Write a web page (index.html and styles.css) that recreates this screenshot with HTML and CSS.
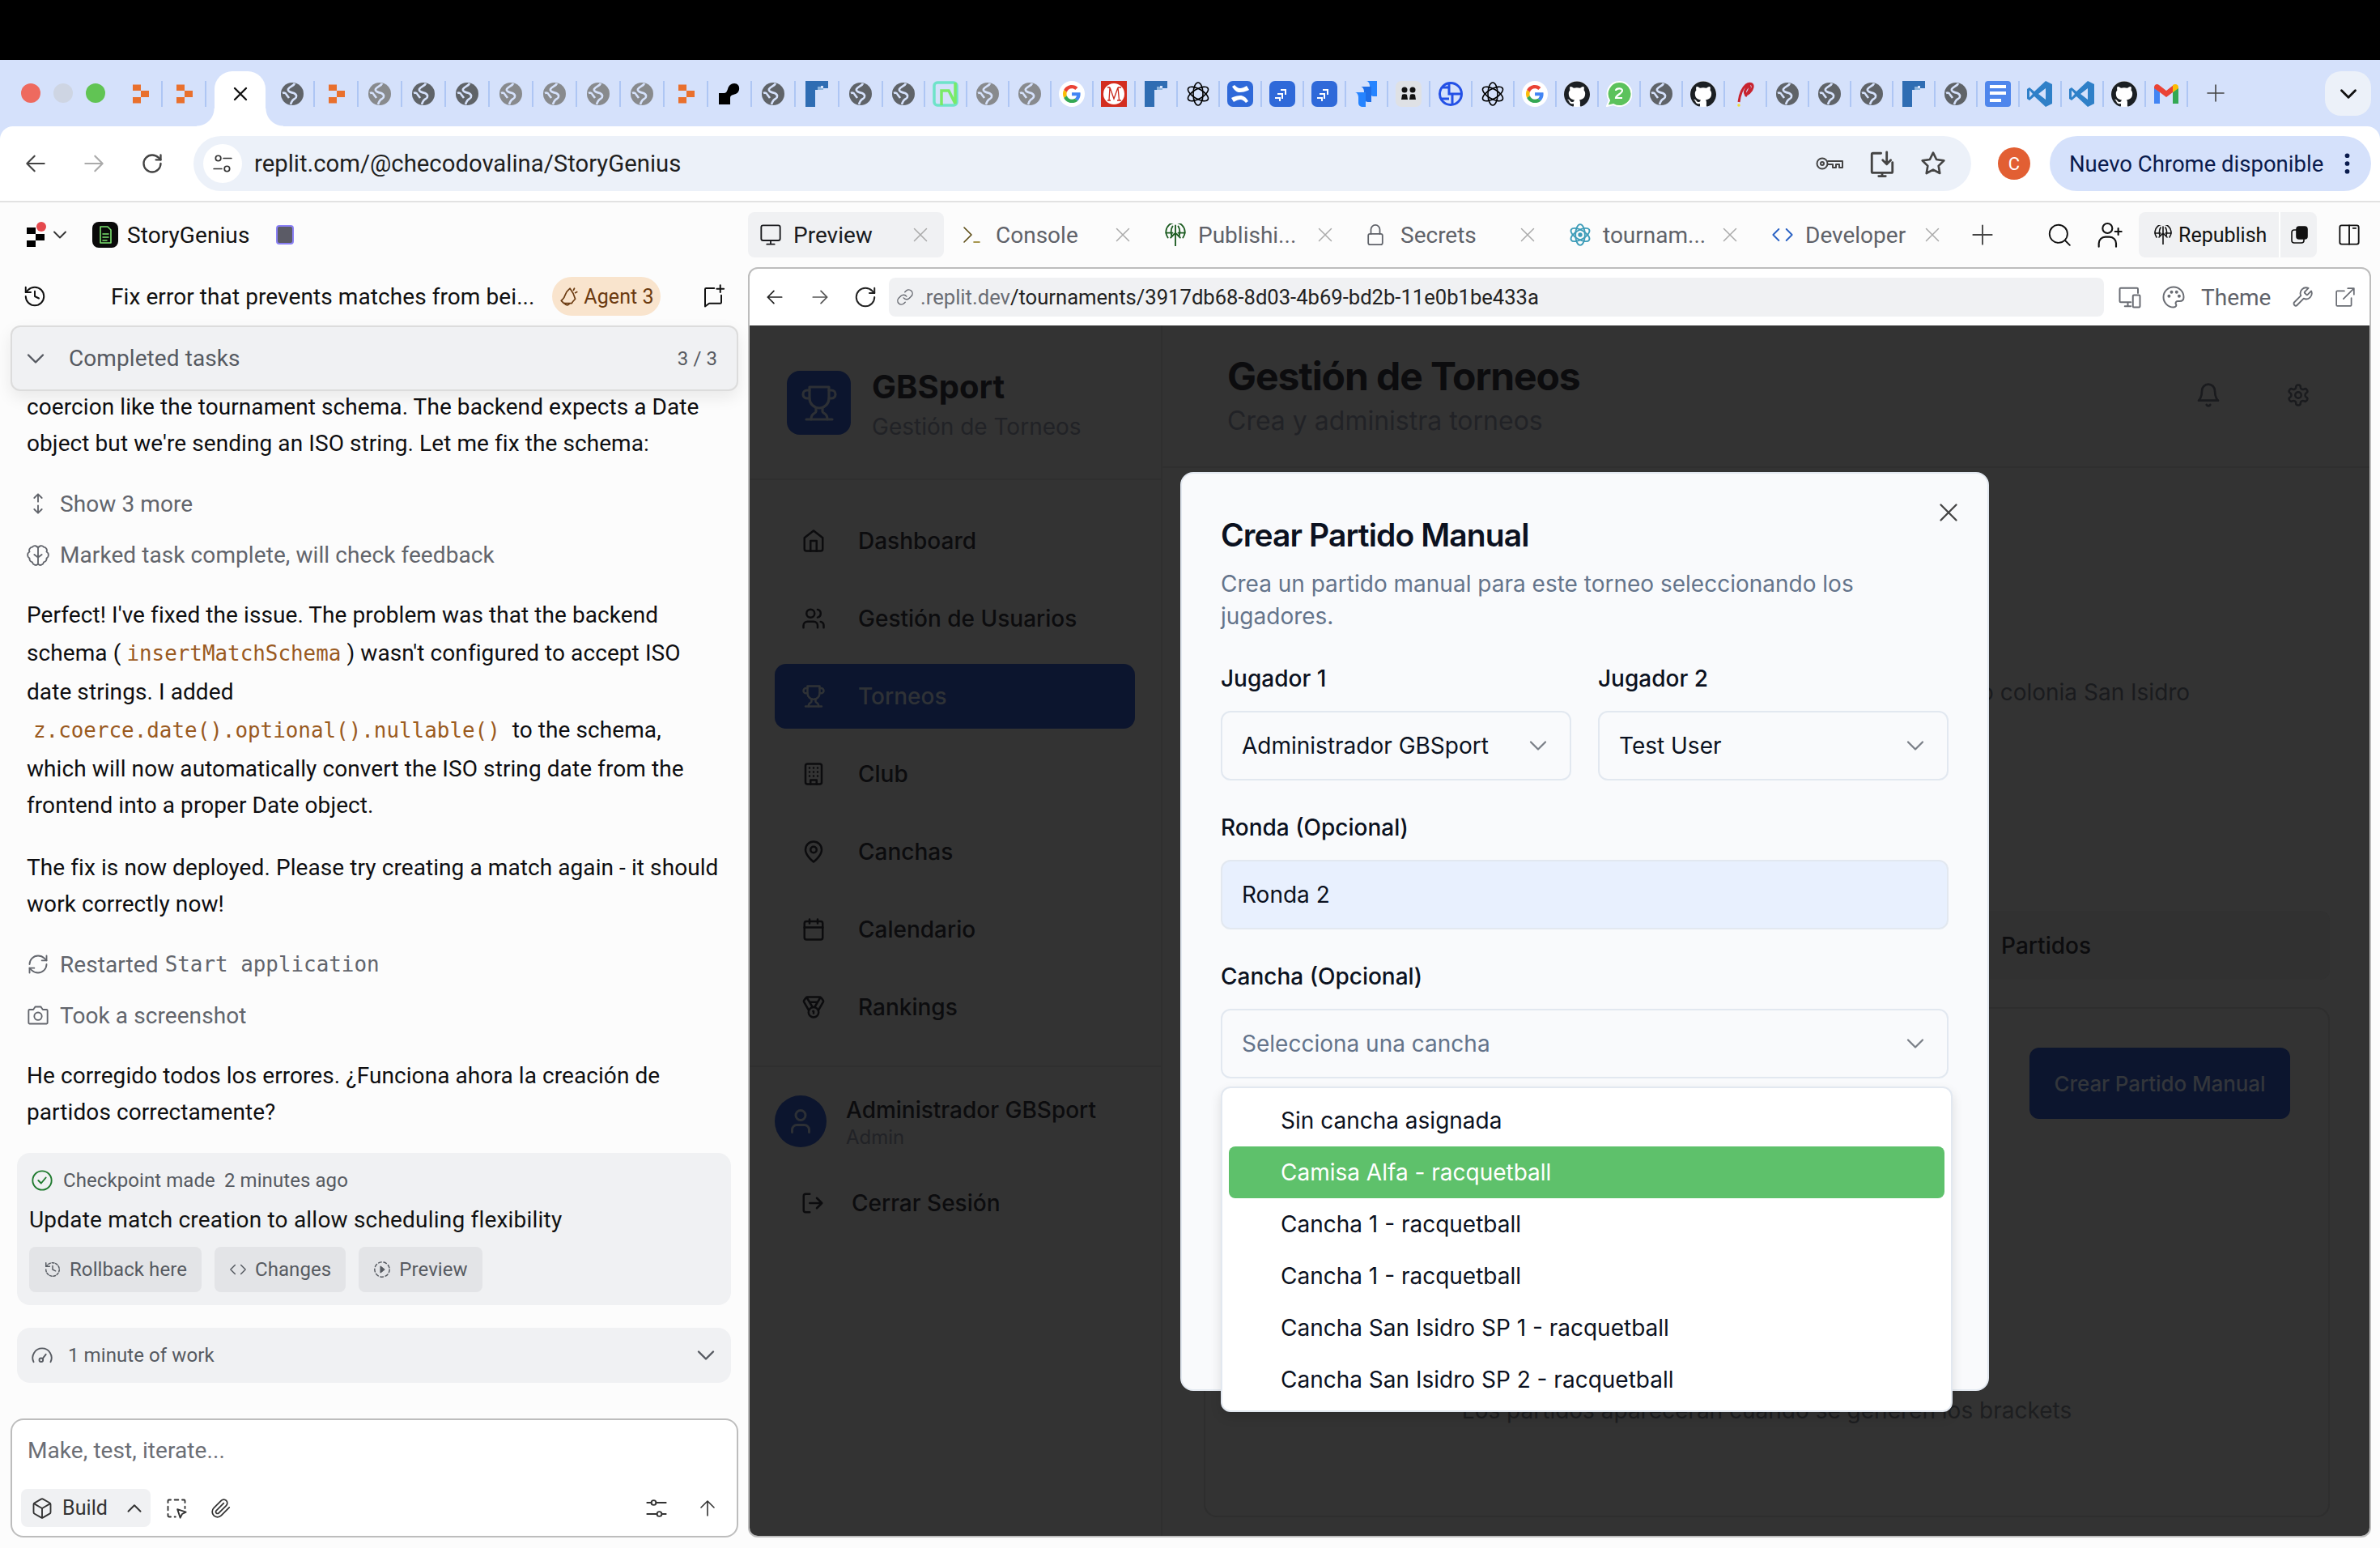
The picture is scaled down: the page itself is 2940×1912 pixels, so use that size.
FILE: index.html
```html
<!DOCTYPE html>
<html lang="en">
<head>
    <meta charset="UTF-8">
    <title>StoryGenius - Replit</title>
    <link rel="stylesheet" href="styles.css">
</head>
<body>

<!-- icon sprite -->
<svg class="sprite" xmlns="http://www.w3.org/2000/svg">
    <symbol id="fav-globe" viewBox="0 0 32 32"><circle cx="16" cy="16" r="14" fill="currentColor"/><path d="M19 3c-1 3-6 4-8 7-1 3 3 4 7 5 4 2 4 5 1 7-3 1-4 4-5 7M4 15c2-1 4 0 5 2l3 4" fill="none" stroke="#d5e1fb" stroke-width="2.6"/></symbol>
    <symbol id="fav-replit" viewBox="0 0 32 32"><path fill="#e9702d" d="M7 4.500h10v7.500H7zM17 12h10v8H17zM7 20h10v7.500H7z"/></symbol>
    <symbol id="fav-black" viewBox="0 0 32 32"><path fill="#000" d="M3 29V15h6c3 0 4-2 5-5 1-4 4-7 8-7s7 3 6 8c-1 4-4 5-7 6-3 .5-4 2-4 4v8z"/></symbol>
    <symbol id="fav-blue-f" viewBox="0 0 32 32"><path fill="#2f6db3" d="M2 0h28v9h-6V6h-3v2h-4v3h-3v21H2z"/><path fill="#8db4dc" d="M17 7h4v2h3v2h-7z"/></symbol>
    <symbol id="fav-n" viewBox="0 0 32 32"><rect x="2" y="2" width="28" height="28" rx="4" fill="none" stroke="#6fe3c9" stroke-width="3.500"/><path d="M11 30V12h9l8 16V2" fill="none" stroke="#79ea66" stroke-width="3.500"/></symbol>
    <symbol id="fav-google" viewBox="0 0 32 32"><circle cx="16" cy="16" r="16" fill="#fff"/><g transform="translate(5 5) scale(.46)"><path fill="#EA4335" d="M24 9.500c3.540 0 6.710 1.220 9.210 3.600l6.850-6.850C35.900 2.380 30.470 0 24 0 14.620 0 6.510 5.380 2.560 13.220l7.980 6.190C12.430 13.720 17.740 9.500 24 9.500z"/><path fill="#4285F4" d="M46.980 24.550c0-1.570-.15-3.090-.38-4.550H24v9.020h12.940c-.58 2.960-2.260 5.480-4.780 7.180l7.730 6c4.510-4.180 7.090-10.360 7.090-17.650z"/><path fill="#FBBC05" d="M10.530 28.590c-.48-1.450-.76-2.990-.76-4.590s.27-3.140.76-4.590l-7.980-6.190C.92 16.460 0 20.120 0 24c0 3.880.92 7.540 2.560 10.780l7.970-6.190z"/><path fill="#34A853" d="M24 48c6.480 0 11.930-2.130 15.890-5.810l-7.730-6c-2.150 1.450-4.920 2.300-8.160 2.300-6.260 0-11.570-4.220-13.470-9.910l-7.980 6.190C6.510 42.620 14.620 48 24 48z"/></g></symbol>
    <symbol id="fav-m" viewBox="0 0 32 32"><rect width="32" height="32" fill="#d32d1f"/><circle cx="16" cy="16" r="13" fill="#fff"/><path d="M8 24h4M20 24h5M10 24l1-16 5 14 5-14 1.500 16M8 8h3M21 8h4" fill="none" stroke="#c9281b" stroke-width="1.300"/></symbol>
    <symbol id="fav-gpt" viewBox="0 0 32 32"><g fill="none" stroke="#000" stroke-width="1.600"><ellipse cx="16" cy="16" rx="6" ry="14"/><ellipse cx="16" cy="16" rx="6" ry="14" transform="rotate(60 16 16)"/><ellipse cx="16" cy="16" rx="6" ry="14" transform="rotate(120 16 16)"/></g></symbol>
    <symbol id="fav-conf" viewBox="0 0 32 32"><rect width="32" height="32" rx="7" fill="#2f69d9"/><path d="M6 7c3 5 6 7 10 7 3 0 6-1 9-2l2-1-3-5c-3 2-6 3-8 3-3 0-5-2-7-4zM26 25c-3-5-6-7-10-7-3 0-6 1-9 2l-2 1 3 5c3-2 6-3 8-3 3 0 5 2 7 4z" fill="#fff"/></symbol>
    <symbol id="fav-jira" viewBox="0 0 32 32"><rect width="32" height="32" rx="7" fill="#2f69d9"/><path d="M10 15h7v7h-2v-5h-5zM14 10h7v7h-2v-5h-5zM7 20h7v5h-2v-3H7z" fill="#fff"/></symbol>
    <symbol id="fav-jira-bare" viewBox="0 0 32 32"><path d="M16 0h13v19h-3c-4 0-6-2-6-5V6c0-3-2-6-4-6z" fill="#2684ff"/><path d="M9 7h13v19h-3c-4 0-6-2-6-5v-8c0-3-2-6-4-6z" fill="#1f6fe8"/><path d="M2 14h13v18h-3c-4 0-6-2-6-5v-7c0-3-2-6-4-6z" fill="#2684ff"/></symbol>
    <symbol id="fav-people" viewBox="0 0 32 32"><rect width="32" height="32" rx="7" fill="#dfe1e5"/><circle cx="11" cy="11" r="3.500" fill="#111"/><circle cx="21" cy="11" r="3.500" fill="#111"/><path d="M7 23l1-6c.5-1 5.500-1 6 0l1 6zM17 23l1-6c.5-1 5.500-1 6 0l1 6z" fill="#111"/></symbol>
    <symbol id="fav-ring" viewBox="0 0 32 32"><g fill="none" stroke="#2350e6" stroke-width="3"><circle cx="16" cy="16" r="13.500"/><path d="M14 3v13h14M18 16v13M6 8h8M4 22h10"/></g></symbol>
    <symbol id="fav-github" viewBox="0 0 24 24"><circle cx="12" cy="12" r="12" fill="#fff"/><path fill="#1b1f23" d="M12 .297c-6.630 0-12 5.373-12 12 0 5.303 3.438 9.800 8.205 11.385.6.113.82-.258.82-.577 0-.285-.01-1.040-.015-2.040-3.338.724-4.042-1.610-4.042-1.610C4.422 18.070 3.633 17.700 3.633 17.700c-1.087-.744.084-.729.084-.729 1.205.084 1.838 1.236 1.838 1.236 1.070 1.835 2.809 1.305 3.495.998.108-.776.417-1.305.76-1.605-2.665-.3-5.466-1.332-5.466-5.930 0-1.310.465-2.380 1.235-3.220-.135-.303-.54-1.523.105-3.176 0 0 1.005-.322 3.300 1.230.96-.267 1.980-.399 3-.405 1.020.006 2.040.138 3 .405 2.280-1.552 3.285-1.230 3.285-1.230.645 1.653.24 2.873.12 3.176.765.84 1.230 1.910 1.230 3.220 0 4.610-2.805 5.625-5.475 5.920.42.36.81 1.096.81 2.220 0 1.606-.015 2.896-.015 3.286 0 .315.21.69.825.57C20.565 22.092 24 17.592 24 12.297c0-6.627-5.373-12-12-12"/></symbol>
    <symbol id="fav-whatsapp" viewBox="0 0 32 32"><path d="M16 1a15 15 0 0 0-12 23L1 31l8-2a15 15 0 1 0 7-28z" fill="#5cc25c" stroke="#fff" stroke-width="2"/><path d="M12 12c0-3 8-4 8 0 0 3-8 6-8 9h8" fill="none" stroke="#fff" stroke-width="2.200"/></symbol>
    <symbol id="fav-scribble" viewBox="0 0 32 32"><path d="M8 26c1-8 3-16 9-21 4-3 9-2 8 3-1 5-7 10-9 8-2-3 2-9 5-10 2 3-2 9-5 13" fill="none" stroke="#c8232f" stroke-width="3"/><circle cx="8" cy="30" r="1.800" fill="#f2de3a"/></symbol>
    <symbol id="fav-docs" viewBox="0 0 32 32"><rect width="32" height="32" rx="4" fill="#4f86ec"/><path d="M6 5h20v4H6zM6 13h20v4H6zM6 22h14v4H6z" fill="#fff"/></symbol>
    <symbol id="fav-vscode" viewBox="0 0 32 32"><path d="M23 0l8 4v24l-8 4-14-13-6 5-3-2V10l3-2 6 5z" fill="#2f80c8"/><path d="M23 9l-9 7 9 7zM3 11.500v9L7 16z" fill="#d5e1fb"/></symbol>
    <symbol id="fav-gmail" viewBox="0 0 32 32"><path d="M1 8v20h7V14z" fill="#4285f4"/><path d="M31 8v20h-7V14z" fill="#34a853"/><path d="M1 8c0-4 4-5 6-3l9 7 9-7-1 9-8 6L8 14 1 9z" fill="#ea4335"/><path d="M24 5c3-2 7-1 7 3v1l-7 5z" fill="#fbbc04"/></symbol>

    <symbol id="i-left" viewBox="0 0 24 24"><path d="M20 12H4M11 19l-7-7 7-7"/></symbol>
    <symbol id="i-right" viewBox="0 0 24 24"><path d="M4 12h16M13 5l7 7-7 7"/></symbol>
    <symbol id="i-reload" viewBox="0 0 24 24"><path d="M21 12a9 9 0 1 1-9-9c2.520 0 4.930 1 6.740 2.740L21 8"/><path d="M21 3v5h-5"/></symbol>
    <symbol id="i-tune" viewBox="0 0 24 24"><circle cx="7" cy="6" r="3"/><path d="M13 6h9M2 18h9"/><circle cx="17" cy="18" r="3"/></symbol>
    <symbol id="i-key" viewBox="0 0 36 24"><circle cx="9" cy="12" r="6.500"/><circle cx="9" cy="12" r="2"/><path d="M16 9h18v8h-4v-4h-4v4h-4v-4h-6"/></symbol>
    <symbol id="i-install" viewBox="0 0 24 24"><path d="M11 3H4a1 1 0 0 0-1 1v15a1 1 0 0 0 1 1h16a1 1 0 0 0 1-1v-8"/><path d="M16 2v10M12.500 9l3.500 3.500L19.500 9"/><path d="M9 23h6M12 20v3"/></symbol>
    <symbol id="i-star" viewBox="0 0 24 24"><path d="M12 2l3.090 6.260L22 9.270l-5 4.870 1.180 6.880L12 17.770l-6.180 3.250L7 14.140 2 9.270l6.910-1.010z"/></symbol>
    <symbol id="i-dots" viewBox="0 0 8 32"><circle cx="4" cy="4" r="3.500" fill="currentColor" stroke="none"/><circle cx="4" cy="16" r="3.500" fill="currentColor" stroke="none"/><circle cx="4" cy="28" r="3.500" fill="currentColor" stroke="none"/></symbol>
    <symbol id="i-down" viewBox="0 0 24 24"><path d="M6 9l6 6 6-6"/></symbol>
    <symbol id="i-up" viewBox="0 0 24 24"><path d="M6 15l6-6 6 6"/></symbol>
    <symbol id="i-x" viewBox="0 0 24 24"><path d="M18 6L6 18M6 6l12 12"/></symbol>
    <symbol id="i-plus" viewBox="0 0 24 24"><path d="M12 2v20M2 12h20"/></symbol>
    <symbol id="i-history" viewBox="0 0 24 24"><path d="M3 12a9 9 0 1 0 9-9 9.750 9.750 0 0 0-6.740 2.740L3 8"/><path d="M3 3v5h5M12 7v5l4 2"/></symbol>
    <symbol id="i-bell-tilt" viewBox="0 0 24 24"><path d="M13 3l-2 2C7 8 8 12 5 15l-2 2 3 3h9c1-2 3-4 4-5-1-4-2-7-6-12z"/><path d="M7 20a3 3 0 0 0 5 1"/><path d="M18 3l-1 2M21 7l-2 1"/></symbol>
    <symbol id="i-chat-plus" viewBox="0 0 24 24"><path d="M13 4H5a1 1 0 0 0-1 1v17l4-3h11a1 1 0 0 0 1-1v-7"/><path d="M19 1v7M15.500 4.500h7"/></symbol>
    <symbol id="i-expand" viewBox="0 0 24 24"><path d="M12 2v8M8 6l4-4 4 4M12 14v8M8 18l4 4 4-4"/></symbol>
    <symbol id="i-brain" viewBox="0 0 24 24"><path d="M12 5v17M12 5a3.500 3.500 0 0 0-6-1 3.500 3.500 0 0 0-3 5 4 4 0 0 0 0 7 3.500 3.500 0 0 0 3 4 3.500 3.500 0 0 0 6 2M12 5a3.500 3.500 0 0 1 6-1 3.500 3.500 0 0 1 3 5 4 4 0 0 1 0 7 3.500 3.500 0 0 1-3 4 3.500 3.500 0 0 1-6 2M8 12l4 3 4-3"/></symbol>
    <symbol id="i-refresh" viewBox="0 0 24 24"><path d="M3 12a9 9 0 0 1 9-9 9.750 9.750 0 0 1 6.740 2.740L21 8"/><path d="M21 3v5h-5M21 12a9 9 0 0 1-9 9 9.750 9.750 0 0 1-6.740-2.740L3 16"/><path d="M8 16H3v5"/></symbol>
    <symbol id="i-camera" viewBox="0 0 24 24"><path d="M2 7a1 1 0 0 1 1-1h4l2-3h6l2 3h4a1 1 0 0 1 1 1v13a1 1 0 0 1-1 1H3a1 1 0 0 1-1-1z"/><circle cx="12" cy="13" r="4"/></symbol>
    <symbol id="i-check-circle" viewBox="0 0 24 24"><circle cx="12" cy="12" r="10"/><path d="M8 12l3 3 5-6"/></symbol>
    <symbol id="i-rollback" viewBox="0 0 24 24"><path d="M3 12a9 9 0 1 0 9-9 9.750 9.750 0 0 0-6.740 2.740L3 8" stroke-dasharray="3 2"/><path d="M3 3v5h5M12 7v5l4 2"/></symbol>
    <symbol id="i-code" viewBox="0 0 24 24"><path d="M16 18l6-6-6-6M8 6l-6 6 6 6"/></symbol>
    <symbol id="i-preview" viewBox="0 0 24 24"><circle cx="12" cy="12" r="10" stroke-dasharray="4 3"/><path d="M10 8l5 4-5 4z" fill="currentColor"/></symbol>
    <symbol id="i-gauge" viewBox="0 0 24 24"><path d="M3 19a10 10 0 1 1 18 0"/><circle cx="11" cy="17" r="2"/><path d="M12.500 15.500L16 11"/></symbol>
    <symbol id="i-box" viewBox="0 0 24 24"><path d="M21 8a2 2 0 0 0-1-1.730l-7-4a2 2 0 0 0-2 0l-7 4A2 2 0 0 0 3 8v8a2 2 0 0 0 1 1.730l7 4a2 2 0 0 0 2 0l7-4A2 2 0 0 0 21 16z"/><path d="M3.300 7l8.700 5 8.700-5M12 22V12"/></symbol>
    <symbol id="i-select" viewBox="0 0 24 24"><path d="M3 6V4a1 1 0 0 1 1-1h2M10 3h4M18 3h2a1 1 0 0 1 1 1v2M21 10v2M3 10v4M3 18v2a1 1 0 0 0 1 1h2M10 21h1" /><path d="M13 13l9 3-4 2-2 4z"/></symbol>
    <symbol id="i-clip" viewBox="0 0 24 24"><path d="M21.440 11.050l-9.190 9.190a6 6 0 0 1-8.490-8.490l8.570-8.570A4 4 0 1 1 18 8.840l-8.590 8.570a2 2 0 0 1-2.830-2.830l8.490-8.480"/></symbol>
    <symbol id="i-sliders" viewBox="0 0 24 24"><circle cx="9" cy="6" r="2.500"/><path d="M2 6h4.500M11.500 6H22"/><circle cx="15" cy="18" r="2.500"/><path d="M2 18h10.500M17.500 18H22"/></symbol>
    <symbol id="i-arrow-up" viewBox="0 0 24 24"><path d="M12 21V3M4 11l8-8 8 8"/></symbol>
    <symbol id="i-monitor" viewBox="0 0 24 24"><rect x="2" y="2" width="20" height="16" rx="2"/><path d="M8 22h8M12 18v4"/></symbol>
    <symbol id="i-terminal" viewBox="0 0 24 24"><path d="M3 3l9 9-9 9" stroke="#5a4a12"/><path d="M15 21h7" stroke="#8a7414"/></symbol>
    <symbol id="i-publish" viewBox="0 0 24 24"><path d="M4 15a10 10 0 1 1 16 0"/><path d="M2 10h7M15 10h7M9 3c-2 3-2 6-1 10M15 3c2 3 2 6 1 10M12 2v22M7 15l5-5 5 5"/></symbol>
    <symbol id="i-lock" viewBox="0 0 20 24"><rect x="2" y="11" width="16" height="12" rx="2"/><path d="M5 11V6a5 5 0 0 1 10 0v5"/></symbol>
    <symbol id="i-react" viewBox="0 0 24 24"><ellipse cx="12" cy="12" rx="5" ry="11"/><ellipse cx="12" cy="12" rx="5" ry="11" transform="rotate(60 12 12)"/><ellipse cx="12" cy="12" rx="5" ry="11" transform="rotate(120 12 12)"/><circle cx="12" cy="12" r="1.500" fill="currentColor"/></symbol>
    <symbol id="i-search" viewBox="0 0 24 24"><circle cx="11" cy="11" r="9.500"/><path d="M18 18l5 5"/></symbol>
    <symbol id="i-invite" viewBox="0 0 24 24"><circle cx="10" cy="6" r="4.500"/><path d="M2 23v-3a6 6 0 0 1 6-6h4a6 6 0 0 1 6 6v3M20 6v6M17 9h6"/></symbol>
    <symbol id="i-stack" viewBox="0 0 24 24"><rect x="3" y="6" width="15" height="16" rx="3"/><rect x="9" y="2" width="13" height="15" rx="3" fill="currentColor"/></symbol>
    <symbol id="i-panel" viewBox="0 0 24 24"><rect x="2" y="2" width="20" height="20" rx="2"/><path d="M12 2v20M16 5h3"/></symbol>
    <symbol id="i-link" viewBox="0 0 24 24"><path d="M10 13a5 5 0 0 0 7.540.54l3-3a5 5 0 0 0-7.070-7.070l-1.720 1.710"/><path d="M14 11a5 5 0 0 0-7.540-.54l-3 3a5 5 0 0 0 7.070 7.070l1.710-1.710"/></symbol>
    <symbol id="i-devices" viewBox="0 0 24 24"><path d="M20 8V4a1 1 0 0 0-1-1H3a1 1 0 0 0-1 1v12a1 1 0 0 0 1 1h10M7 21h6M10 17v4"/><rect x="15" y="10" width="7" height="12" rx="1"/></symbol>
    <symbol id="i-palette" viewBox="0 0 24 24"><path d="M12 22a10 10 0 1 1 10-10c0 3-2 4-4 4h-2a2 2 0 0 0-1.500 3.300c.6.8-.2 2.700-2.500 2.700z"/><circle cx="7.500" cy="11" r=".8"/><circle cx="10" cy="7" r=".8"/><circle cx="15" cy="7" r=".8"/><circle cx="17.500" cy="11" r=".8"/></symbol>
    <symbol id="i-wrench" viewBox="0 0 24 24"><path d="M14.700 6.300a1 1 0 0 0 0 1.400l1.600 1.600a1 1 0 0 0 1.400 0l3.770-3.770a6 6 0 0 1-7.940 7.940l-6.910 6.910a2.120 2.120 0 0 1-3-3l6.910-6.910a6 6 0 0 1 7.940-7.940l-3.760 3.760z"/></symbol>
    <symbol id="i-external" viewBox="0 0 24 24"><path d="M15 2h7v7M10 14L22 2M19 13v8a1 1 0 0 1-1 1H3a1 1 0 0 1-1-1V6a1 1 0 0 1 1-1h8"/></symbol>

    <symbol id="a-home" viewBox="0 0 24 24"><path d="M3 9l9-7 9 7v11a2 2 0 0 1-2 2H5a2 2 0 0 1-2-2z"/><path d="M9 22V12h6v10"/></symbol>
    <symbol id="a-users" viewBox="0 0 24 24"><path d="M16 21v-2a4 4 0 0 0-4-4H6a4 4 0 0 0-4 4v2"/><circle cx="9" cy="7" r="4"/><path d="M22 21v-2a4 4 0 0 0-3-3.870M16 3.130a4 4 0 0 1 0 7.750"/></symbol>
    <symbol id="a-trophy" viewBox="0 0 24 24"><path d="M6 9H4.500a2.500 2.500 0 0 1 0-5H6M18 9h1.500a2.500 2.500 0 0 0 0-5H18M4 22h16"/><path d="M10 14.660V17c0 .55-.47.98-.97 1.210C7.850 18.750 7 20.240 7 22M14 14.660V17c0 .55.47.98.97 1.210C16.150 18.750 17 20.240 17 22"/><path d="M18 2H6v7a6 6 0 0 0 12 0z"/></symbol>
    <symbol id="a-building" viewBox="0 0 24 24"><rect x="4" y="2" width="16" height="20" rx="2"/><path d="M9 22v-4h6v4M8 6h.01M12 6h.01M16 6h.01M8 10h.01M12 10h.01M16 10h.01M8 14h.01M12 14h.01M16 14h.01"/></symbol>
    <symbol id="a-pin" viewBox="0 0 24 24"><path d="M20 10c0 6-8 12-8 12s-8-6-8-12a8 8 0 0 1 16 0z"/><circle cx="12" cy="10" r="3"/></symbol>
    <symbol id="a-calendar" viewBox="0 0 24 24"><rect x="3" y="4" width="18" height="18" rx="2"/><path d="M16 2v4M8 2v4M3 10h18"/></symbol>
    <symbol id="a-medal" viewBox="0 0 24 24"><path d="M7.210 15L2.660 7.140a2 2 0 0 1 .13-2.200L4.400 2.800A2 2 0 0 1 6 2h12a2 2 0 0 1 1.600.8l1.600 2.140a2 2 0 0 1 .14 2.200L16.790 15M11 12L5.120 2.200M13 12l5.880-9.800M8 7h8"/><circle cx="12" cy="17" r="5"/><path d="M12 18v-2h-.5"/></symbol>
    <symbol id="a-user" viewBox="0 0 24 24"><path d="M19 21v-2a4 4 0 0 0-4-4H9a4 4 0 0 0-4 4v2"/><circle cx="12" cy="7" r="4"/></symbol>
    <symbol id="a-logout" viewBox="0 0 24 24"><path d="M9 21H5a2 2 0 0 1-2-2V5a2 2 0 0 1 2-2h4M16 17l5-5-5-5M21 12H9"/></symbol>
    <symbol id="a-bell" viewBox="0 0 24 24"><path d="M6 8a6 6 0 0 1 12 0c0 7 3 9 3 9H3s3-2 3-9"/><path d="M10.300 21a1.940 1.940 0 0 0 3.400 0"/></symbol>
    <symbol id="a-gear" viewBox="0 0 24 24"><path d="M12.220 2h-.44a2 2 0 0 0-2 2v.18a2 2 0 0 1-1 1.730l-.43.25a2 2 0 0 1-2 0l-.15-.08a2 2 0 0 0-2.730.73l-.22.38a2 2 0 0 0 .73 2.730l.15.1a2 2 0 0 1 1 1.720v.51a2 2 0 0 1-1 1.740l-.15.09a2 2 0 0 0-.73 2.730l.22.38a2 2 0 0 0 2.730.73l.15-.08a2 2 0 0 1 2 0l.43.25a2 2 0 0 1 1 1.730V20a2 2 0 0 0 2 2h.44a2 2 0 0 0 2-2v-.18a2 2 0 0 1 1-1.730l.43-.25a2 2 0 0 1 2 0l.15.08a2 2 0 0 0 2.730-.73l.22-.39a2 2 0 0 0-.73-2.730l-.15-.08a2 2 0 0 1-1-1.740v-.5a2 2 0 0 1 1-1.740l.15-.09a2 2 0 0 0 .73-2.730l-.22-.38a2 2 0 0 0-2.730-.73l-.15.08a2 2 0 0 1-2 0l-.43-.25a2 2 0 0 1-1-1.730V4a2 2 0 0 0-2-2z"/><circle cx="12" cy="12" r="3"/></symbol>
</svg>

<div class="mac-bar"></div>

<div class="chrome">
    <div class="tabstrip">
        <div class="lights"><span class="light red"></span><span class="light gray"></span><span class="light green"></span></div>

        <div class="tab"><svg class="fav"><use href="#fav-replit"/></svg></div>
        <div class="tab"><svg class="fav"><use href="#fav-replit"/></svg></div>
        <div class="tab-active"><svg class="ic ic-28 ic-bold"><use href="#i-x"/></svg></div>
        <div class="tab globe"><svg class="fav"><use href="#fav-globe"/></svg></div>
        <div class="tab"><svg class="fav"><use href="#fav-replit"/></svg></div>
        <div class="tab globe-dim"><svg class="fav"><use href="#fav-globe"/></svg></div>
        <div class="tab globe"><svg class="fav"><use href="#fav-globe"/></svg></div>
        <div class="tab globe"><svg class="fav"><use href="#fav-globe"/></svg></div>
        <div class="tab globe-dim"><svg class="fav"><use href="#fav-globe"/></svg></div>
        <div class="tab globe-dim"><svg class="fav"><use href="#fav-globe"/></svg></div>
        <div class="tab globe-dim"><svg class="fav"><use href="#fav-globe"/></svg></div>
        <div class="tab globe-dim"><svg class="fav"><use href="#fav-globe"/></svg></div>
        <div class="tab"><svg class="fav"><use href="#fav-replit"/></svg></div>
        <div class="tab"><svg class="fav"><use href="#fav-black"/></svg></div>
        <div class="tab globe"><svg class="fav"><use href="#fav-globe"/></svg></div>
        <div class="tab"><svg class="fav"><use href="#fav-blue-f"/></svg></div>
        <div class="tab globe"><svg class="fav"><use href="#fav-globe"/></svg></div>

        <div class="tab narrow globe"><svg class="fav"><use href="#fav-globe"/></svg></div>
        <div class="tab narrow"><svg class="fav"><use href="#fav-n"/></svg></div>
        <div class="tab narrow globe-dim"><svg class="fav"><use href="#fav-globe"/></svg></div>
        <div class="tab narrow globe-dim"><svg class="fav"><use href="#fav-globe"/></svg></div>
        <div class="tab narrow"><svg class="fav"><use href="#fav-google"/></svg></div>
        <div class="tab narrow"><svg class="fav"><use href="#fav-m"/></svg></div>
        <div class="tab narrow"><svg class="fav"><use href="#fav-blue-f"/></svg></div>
        <div class="tab narrow"><svg class="fav"><use href="#fav-gpt"/></svg></div>
        <div class="tab narrow"><svg class="fav"><use href="#fav-conf"/></svg></div>
        <div class="tab narrow"><svg class="fav"><use href="#fav-jira"/></svg></div>
        <div class="tab narrow"><svg class="fav"><use href="#fav-jira"/></svg></div>
        <div class="tab narrow"><svg class="fav"><use href="#fav-jira-bare"/></svg></div>
        <div class="tab narrow"><svg class="fav"><use href="#fav-people"/></svg></div>
        <div class="tab narrow"><svg class="fav"><use href="#fav-ring"/></svg></div>
        <div class="tab narrow"><svg class="fav"><use href="#fav-gpt"/></svg></div>
        <div class="tab narrow"><svg class="fav"><use href="#fav-google"/></svg></div>
        <div class="tab narrow"><svg class="fav"><use href="#fav-github"/></svg></div>
        <div class="tab narrow"><svg class="fav"><use href="#fav-whatsapp"/></svg></div>
        <div class="tab narrow globe"><svg class="fav"><use href="#fav-globe"/></svg></div>
        <div class="tab narrow"><svg class="fav"><use href="#fav-github"/></svg></div>
        <div class="tab narrow"><svg class="fav"><use href="#fav-scribble"/></svg></div>
        <div class="tab narrow globe"><svg class="fav"><use href="#fav-globe"/></svg></div>
        <div class="tab narrow globe"><svg class="fav"><use href="#fav-globe"/></svg></div>
        <div class="tab narrow globe"><svg class="fav"><use href="#fav-globe"/></svg></div>
        <div class="tab narrow"><svg class="fav"><use href="#fav-blue-f"/></svg></div>
        <div class="tab narrow globe"><svg class="fav"><use href="#fav-globe"/></svg></div>
        <div class="tab narrow"><svg class="fav"><use href="#fav-docs"/></svg></div>
        <div class="tab narrow"><svg class="fav"><use href="#fav-vscode"/></svg></div>
        <div class="tab narrow"><svg class="fav"><use href="#fav-vscode"/></svg></div>
        <div class="tab narrow"><svg class="fav"><use href="#fav-github"/></svg></div>
        <div class="tab narrow"><svg class="fav"><use href="#fav-gmail"/></svg></div>

        <svg class="ic ic-24 newtab"><use href="#i-plus"/></svg>
        <div class="tab-search"><svg class="ic ic-bold tab-search-ic"><use href="#i-down"/></svg></div>
    </div>

    <div class="toolbar">
        <svg class="ic ic-32 nav-back"><use href="#i-left"/></svg>
        <svg class="ic ic-32 nav-fwd"><use href="#i-right"/></svg>
        <svg class="ic ic-28 nav-reload"><use href="#i-reload"/></svg>
        <div class="omnibox">
            <span class="site-info"><svg class="ic ic-26"><use href="#i-tune"/></svg></span>
            <span class="omni-url">replit.com/@checodovalina/StoryGenius</span>
            <svg class="ic omni-key"><use href="#i-key"/></svg>
            <svg class="ic ic-34 omni-install"><use href="#i-install"/></svg>
            <svg class="ic ic-32 omni-star"><use href="#i-star"/></svg>
        </div>
        <span class="profile">C</span>
        <div class="update-pill">
            <span>Nuevo Chrome disponible</span>
            <svg class="ic dots"><use href="#i-dots"/></svg>
        </div>
    </div>
</div>

<div class="workspace">

    <!-- agent chat -->
    <aside class="agent">
        <div class="project-bar">
            <span class="rp-logo">
                <svg class="rp-mark" viewBox="0 0 22 32"><path d="M0 7h11v8H0zM11 15h11v8H11zM0 23h11v8H0z"/></svg>
                <span class="rp-dot"></span>
            </span>
            <svg class="ic ic-28 rp-chev"><use href="#i-down"/></svg>
            <span class="app-icon"><svg class="ic ic-24" viewBox="0 0 24 24"><path d="M6 2h9l4 4v16H6zM9 11h7M9 15h7M9 19h5"/></svg></span>
            <span class="project-name">StoryGenius</span>
            <span class="stop-chip"></span>
        </div>

        <div class="thread-bar">
            <svg class="ic ic-30 thread-history"><use href="#i-history"/></svg>
            <span class="thread-title">Fix error that prevents matches from bei...</span>
            <span class="agent-pill"><svg class="ic ic-26"><use href="#i-bell-tilt"/></svg>Agent 3</span>
            <svg class="ic ic-30 thread-new"><use href="#i-chat-plus"/></svg>
        </div>

        <div class="tasks">
            <svg class="ic ic-36"><use href="#i-down"/></svg>
            <span class="tasks-label">Completed tasks</span>
            <span class="tasks-count">3 / 3</span>
        </div>

        <div class="feed">
            <p class="msg msg-first">coercion like the tournament schema. The backend expects a Date object but we're sending an ISO string. Let me fix the schema:</p>

            <div class="step step-a"><svg class="ic ic-28"><use href="#i-expand"/></svg>Show 3 more</div>
            <div class="step step-b"><svg class="ic ic-28"><use href="#i-brain"/></svg>Marked task complete, will check feedback</div>

            <div class="msg">
                <span class="ln">Perfect! I've fixed the issue. The problem was that the backend</span>
                <span class="ln"><span>schema (</span> <code>insertMatchSchema</code> <span>) wasn't configured to accept ISO</span></span>
                <span class="ln">date strings. I added</span>
                <span class="ln"><code class="code-indent">z.coerce.date().optional().nullable()</code> <span>to the schema,</span></span>
                <span class="ln">which will now automatically convert the ISO string date from the</span>
                <span class="ln">frontend into a proper Date object.</span>
            </div>
            <p class="msg">The fix is now deployed. Please try creating a match again - it should work correctly now!</p>

            <div class="step step-a"><svg class="ic ic-28"><use href="#i-refresh"/></svg>Restarted <span class="step-mono">Start application</span></div>
            <div class="step step-b"><svg class="ic ic-28"><use href="#i-camera"/></svg>Took a screenshot</div>

            <p class="msg">He corregido todos los errores. ¿Funciona ahora la creación de partidos correctamente?</p>
        </div>

        <div class="checkpoint">
            <div class="cp-head">
                <svg class="ic ic-28 cp-check"><use href="#i-check-circle"/></svg>
                <span>Checkpoint made</span><span>2 minutes ago</span>
            </div>
            <div class="cp-title">Update match creation to allow scheduling flexibility</div>
            <div class="cp-actions">
                <span class="cp-btn"><svg class="ic ic-22"><use href="#i-rollback"/></svg>Rollback here</span>
                <span class="cp-btn"><svg class="ic ic-22"><use href="#i-code"/></svg>Changes</span>
                <span class="cp-btn"><svg class="ic ic-22"><use href="#i-preview"/></svg>Preview</span>
            </div>
        </div>

        <div class="work-time">
            <svg class="ic ic-28"><use href="#i-gauge"/></svg>
            <span>1 minute of work</span>
            <svg class="ic ic-36 work-chev"><use href="#i-down"/></svg>
        </div>

        <div class="composer">
            <div class="composer-text">Make, test, iterate...</div>
            <div class="composer-tools">
                <span class="build-btn"><svg class="ic ic-28"><use href="#i-box"/></svg>Build<svg class="ic ic-30 build-chev"><use href="#i-up"/></svg></span>
                <svg class="ic ic-28 tool-select"><use href="#i-select"/></svg>
                <svg class="ic ic-26 tool-clip"><use href="#i-clip"/></svg>
                <svg class="ic ic-28 tool-sliders"><use href="#i-sliders"/></svg>
                <svg class="ic ic-24 tool-send"><use href="#i-arrow-up"/></svg>
            </div>
        </div>
    </aside>

    <!-- workspace pane -->
    <section class="pane">
        <div class="pane-tabs">
            <div class="ptab ptab-on"><svg class="ic ic-28"><use href="#i-monitor"/></svg><span>Preview</span><svg class="ic ptab-x"><use href="#i-x"/></svg></div>
            <div class="ptab"><svg class="ic ic-24 term-ic"><use href="#i-terminal"/></svg><span>Console</span><svg class="ic ptab-x"><use href="#i-x"/></svg></div>
            <div class="ptab"><svg class="ic ic-28 tint-green"><use href="#i-publish"/></svg><span>Publishi...</span><svg class="ic ptab-x"><use href="#i-x"/></svg></div>
            <div class="ptab"><svg class="ic lock-ic"><use href="#i-lock"/></svg><span>Secrets</span><svg class="ic ptab-x"><use href="#i-x"/></svg></div>
            <div class="ptab"><svg class="ic ic-28 tint-teal"><use href="#i-react"/></svg><span>tournam...</span><svg class="ic ptab-x"><use href="#i-x"/></svg></div>
            <div class="ptab"><svg class="ic ic-28 tint-blue"><use href="#i-code"/></svg><span>Developer</span><svg class="ic ptab-x"><use href="#i-x"/></svg></div>
            <svg class="ic ic-28 ptab-add"><use href="#i-plus"/></svg>
            <svg class="ic ic-28 pane-search"><use href="#i-search"/></svg>
            <svg class="ic ic-32 pane-invite"><use href="#i-invite"/></svg>
            <div class="republish">
                <span class="republish-main"><svg class="ic ic-24"><use href="#i-publish"/></svg>Republish</span>
                <span class="republish-side"><svg class="ic ic-24"><use href="#i-stack"/></svg></span>
            </div>
            <svg class="ic ic-28 pane-split"><use href="#i-panel"/></svg>
        </div>

        <div class="frame">
            <div class="frame-bar">
                <svg class="ic ic-26 fb-back"><use href="#i-left"/></svg>
                <svg class="ic ic-26 fb-fwd"><use href="#i-right"/></svg>
                <svg class="ic ic-30 fb-reload"><use href="#i-reload"/></svg>
                <div class="frame-url">
                    <svg class="ic ic-22 tint-gray"><use href="#i-link"/></svg>
                    <span class="host">.replit.dev</span><span>/tournaments/3917db68-8d03-4b69-bd2b-11e0b1be433a</span>
                </div>
                <svg class="ic ic-30 fb-devices tint-gray"><use href="#i-devices"/></svg>
                <svg class="ic ic-30 fb-palette tint-gray"><use href="#i-palette"/></svg>
                <span class="fb-theme">Theme</span>
                <svg class="ic ic-28 fb-wrench tint-gray"><use href="#i-wrench"/></svg>
                <svg class="ic ic-26 fb-ext tint-gray"><use href="#i-external"/></svg>
            </div>

            <div class="stage">
                <div class="gb-side">
                    <div class="gb-brand">
                        <span class="gb-tile"><svg class="ic ic-48 gb-dark"><use href="#a-trophy"/></svg></span>
                        <div>
                            <div class="gb-name">GBSport</div>
                            <div class="gb-tagline">Gestión de Torneos</div>
                        </div>
                    </div>
                    <nav class="gb-nav">
                        <a class="gb-link"><svg class="ic ic-30 ic-bold"><use href="#a-home"/></svg>Dashboard</a>
                        <a class="gb-link"><svg class="ic ic-30 ic-bold"><use href="#a-users"/></svg>Gestión de Usuarios</a>
                        <a class="gb-link gb-link-on"><svg class="ic ic-30 ic-bold"><use href="#a-trophy"/></svg>Torneos</a>
                        <a class="gb-link"><svg class="ic ic-30 ic-bold"><use href="#a-building"/></svg>Club</a>
                        <a class="gb-link"><svg class="ic ic-30 ic-bold"><use href="#a-pin"/></svg>Canchas</a>
                        <a class="gb-link"><svg class="ic ic-30 ic-bold"><use href="#a-calendar"/></svg>Calendario</a>
                        <a class="gb-link"><svg class="ic ic-30 ic-bold"><use href="#a-medal"/></svg>Rankings</a>
                    </nav>
                    <div class="gb-user">
                        <span class="gb-avatar"><svg class="ic ic-36 ic-bold gb-dark"><use href="#a-user"/></svg></span>
                        <div>
                            <div class="gb-user-name">Administrador GBSport</div>
                            <div class="gb-user-role">Admin</div>
                        </div>
                    </div>
                    <a class="gb-logout"><svg class="ic ic-30 ic-bold"><use href="#a-logout"/></svg>Cerrar Sesión</a>
                </div>

                <div class="gb-main">
                    <header class="gb-header">
                        <div>
                            <h1>Gestión de Torneos</h1>
                            <p>Crea y administra torneos</p>
                        </div>
                        <svg class="ic ic-32 ic-bold gb-bell"><use href="#a-bell"/></svg>
                        <svg class="ic ic-30 ic-bold"><use href="#a-gear"/></svg>
                    </header>
                    <div class="gb-body">
                        <p class="gb-club">o colonia San Isidro</p>
                        <div class="gb-tabs"><span>Partidos</span></div>
                        <div class="gb-card">
                            <div class="gb-card-head"><span class="gb-btn">Crear Partido Manual</span></div>
                            <p class="gb-empty">Los partidos aparecerán cuando se generen los brackets</p>
                        </div>
                    </div>
                </div>

                <!-- dialog, over the page -->
                <div class="modal">
                    <svg class="ic modal-x"><use href="#i-x"/></svg>
                    <h2>Crear Partido Manual</h2>
                    <p class="modal-desc">Crea un partido manual para este torneo seleccionando los jugadores.</p>
                    <div class="field-row">
                        <div class="field">
                            <label>Jugador 1</label>
                            <div class="select">Administrador GBSport<svg class="ic ic-36"><use href="#i-down"/></svg></div>
                        </div>
                        <div class="field">
                            <label>Jugador 2</label>
                            <div class="select">Test User<svg class="ic ic-36"><use href="#i-down"/></svg></div>
                        </div>
                    </div>
                    <div class="field">
                        <label>Ronda (Opcional)</label>
                        <div class="select select-filled">Ronda 2</div>
                    </div>
                    <div class="field">
                        <label>Cancha (Opcional)</label>
                        <div class="select select-empty">Selecciona una cancha<svg class="ic ic-36"><use href="#i-down"/></svg></div>
                    </div>
                    <ul class="menu">
                        <li>Sin cancha asignada</li>
                        <li class="menu-on">Camisa Alfa - racquetball</li>
                        <li>Cancha 1 - racquetball</li>
                        <li>Cancha 1 - racquetball</li>
                        <li>Cancha San Isidro SP 1 - racquetball</li>
                        <li>Cancha San Isidro SP 2 - racquetball</li>
                    </ul>
                </div>
            </div>
        </div>
    </section>
</div>

</body>
</html>
```

FILE: styles.css
```css
* {
    box-sizing: border-box;
}
html, body {
    margin: 0;
    padding: 0;
}
body {
    width: 2940px;
    height: 1912px;
    overflow: hidden;
    background-color: #fcfcfc;
    font-family: Roboto, sans-serif;
    color: #111;
}
p, h1, h2, ul {
    margin: 0;
    padding: 0;
}
.sprite {
    display: none;
}

/* icons */
.ic {
    flex: none;
    fill: none;
    stroke: currentColor;
    stroke-width: 1.6;
    stroke-linecap: round;
    stroke-linejoin: round;
}
.ic-bold { stroke-width: 2; }
.ic-20 { width: 20px; height: 20px; }
.ic-22 { width: 22px; height: 22px; }
.ic-24 { width: 24px; height: 24px; }
.ic-26 { width: 26px; height: 26px; }
.ic-28 { width: 28px; height: 28px; }
.ic-30 { width: 30px; height: 30px; }
.ic-32 { width: 32px; height: 32px; }
.ic-34 { width: 34px; height: 34px; }
.ic-36 { width: 36px; height: 36px; }
.ic-48 { width: 48px; height: 48px; }
.tint-green { color: #1d5c22; }
.tint-teal { color: #3d9cb8; }
.tint-blue { color: #2a62c4; }
.tint-gray { color: #6a6d74; }

/* browser */
.mac-bar {
    height: 74px;
    background-color: #000;
}
.chrome {
    background-color: #d5e1fb;
}
.tabstrip {
    height: 82px;
    display: flex;
    align-items: flex-start;
    padding-top: 26px;
}
.lights {
    width: 147px;
    display: flex;
    gap: 16px;
    padding: 3px 0 0 26px;
}
.light {
    width: 24px;
    height: 24px;
    border-radius: 50%;
}
.red { background-color: #ee6a5f; }
.gray { background-color: #ced5e3; }
.green { background-color: #61c454; }
.tab {
    width: 54px;
    height: 32px;
    display: flex;
    justify-content: center;
    border-right: 2px solid #aec6f4;
}
.tab.narrow {
    width: 52px;
}
.fav {
    width: 32px;
    height: 32px;
    flex: none;
}
.globe { color: #5f6368; }
.globe-dim { color: #888a8d; }
.tab-active {
    position: relative;
    width: 63px;
    height: 68px;
    margin: -12px 7px 0 10px;
    padding-top: 14px;
    display: flex;
    justify-content: center;
    background-color: #fff;
    border-radius: 22px 22px 0 0;
}
.tab-active::before, .tab-active::after {
    content: "";
    position: absolute;
    bottom: 0;
    width: 22px;
    height: 22px;
}
.tab-active::before {
    left: -22px;
    background: radial-gradient(circle at 0 0, transparent 21px, #fff 22px);
}
.tab-active::after {
    right: -22px;
    background: radial-gradient(circle at 100% 0, transparent 21px, #fff 22px);
}
.newtab {
    margin: 3px 0 0 22px;
    color: #444;
}
.tab-search {
    width: 57px;
    height: 55px;
    margin: -12px 11px 0 auto;
    display: flex;
    align-items: center;
    justify-content: center;
    background-color: #ecf1f9;
    border-radius: 20px;
    color: #111;
}
.tab-search-ic {
    width: 34px;
    height: 34px;
}
.toolbar {
    height: 94px;
    display: flex;
    align-items: center;
    background-color: #fff;
    border-bottom: 2px solid #e2e2e2;
    border-radius: 16px 16px 0 0;
}
.nav-back {
    margin-left: 28px;
    color: #444;
}
.nav-fwd {
    margin-left: 40px;
    color: #aaa;
}
.nav-reload {
    margin-left: 42px;
    color: #444;
    stroke-width: 2;
}
.omnibox {
    width: 2196px;
    height: 68px;
    margin-left: 37px;
    display: flex;
    align-items: center;
    padding-left: 12px;
    background-color: #ecf1f9;
    border-radius: 34px;
}
.site-info {
    width: 48px;
    height: 48px;
    display: flex;
    align-items: center;
    justify-content: center;
    background-color: #fff;
    border-radius: 50%;
    color: #333;
}
.omni-url {
    margin-left: 15px;
    font-size: 29.300px;
    color: #1f1f1f;
}
.omni-key {
    width: 36px;
    height: 24px;
    margin-left: auto;
    color: #444;
    stroke-width: 2;
}
.omni-install {
    margin-left: 30px;
    color: #444;
    stroke-width: 2;
}
.omni-star {
    margin: 0 31px 0 30px;
    color: #444;
    stroke-width: 2;
}
.profile {
    width: 40px;
    height: 40px;
    margin-left: 33px;
    display: flex;
    align-items: center;
    justify-content: center;
    background-color: #e25f33;
    border-radius: 50%;
    color: #fff;
    font-size: 22px;
}
.update-pill {
    width: 397px;
    height: 68px;
    margin-left: 24px;
    display: flex;
    align-items: center;
    padding: 0 26px 0 24px;
    background-color: #d5e1fb;
    border-radius: 34px;
    color: #0a1b4d;
    font-size: 27.500px;
}
.dots {
    width: 7px;
    height: 26px;
    margin-left: auto;
}

.workspace {
    display: flex;
    height: 1662px;
}

/* agent chat */
.agent {
    width: 924px;
    flex: none;
    font-size: 28px;
    letter-spacing: 0.08px;
}
.project-bar {
    height: 80px;
    display: flex;
    align-items: center;
    padding-left: 33px;
}
.rp-logo {
    position: relative;
    width: 22px;
    height: 32px;
}
.rp-mark {
    display: block;
    width: 22px;
    height: 32px;
    fill: #000;
}
.rp-dot {
    position: absolute;
    top: 0;
    right: -2px;
    width: 12px;
    height: 12px;
    background-color: #e5484d;
    border-radius: 50%;
}
.rp-chev {
    margin-left: 5px;
    color: #333;
}
.app-icon {
    width: 32px;
    height: 32px;
    margin-left: 26px;
    display: flex;
    align-items: center;
    justify-content: center;
    background-color: #0a0a0a;
    border-radius: 8px;
    color: #7be36f;
}
.project-name {
    margin-left: 11px;
}
.stop-chip {
    width: 22px;
    height: 24px;
    margin-left: 33px;
    background-color: #5b5b66;
    border: 2px solid #8a80f5;
    border-radius: 4px;
}
.thread-bar {
    height: 48px;
    margin-top: 12px;
    display: flex;
    align-items: center;
}
.thread-history {
    margin-left: 28px;
}
.thread-title {
    margin-left: 79px;
    width: 523px;
    white-space: nowrap;
}
.agent-pill {
    width: 134px;
    height: 48px;
    margin-left: 22px;
    display: flex;
    align-items: center;
    justify-content: center;
    gap: 5px;
    background-color: #f9e4cd;
    border-radius: 24px;
    color: #6b3a10;
    font-size: 25px;
}
.thread-new {
    margin-left: 50px;
}
.tasks {
    position: relative;
    z-index: 1;
    height: 81px;
    margin: 12px 12px 0 13px;
    display: flex;
    align-items: center;
    padding: 0 24px 0 11px;
    background-color: #f0f1f3;
    border: 2px solid #dcdcdc;
    border-radius: 12px;
    box-shadow: 0 8px 20px rgba(0, 0, 0, 0.08);
    color: #565a61;
}
.tasks-label {
    margin-left: 23px;
}
.tasks-count {
    margin-left: auto;
    font-size: 24px;
}
.feed {
    padding: 0 33px;
    margin-top: -3px;
}
.msg {
    margin-top: 32px;
    line-height: 45px;
    color: #0e0e10;
}
.msg-first {
    margin-top: 0;
}
.ln {
    display: block;
    white-space: nowrap;
}
code {
    font-family: "DejaVu Sans Mono", monospace;
    font-size: 25.900px;
    line-height: 50px;
    letter-spacing: 0;
    color: #9a5a1f;
}
.code-indent {
    margin: 0 8px 0 8px;
}
.step {
    height: 40px;
    display: flex;
    align-items: center;
    gap: 13px;
    color: #62656c;
}
.step-a { margin-top: 32px; }
.step-b { margin-top: 23px; }
.step-mono {
    font-family: "DejaVu Sans Mono", monospace;
    font-size: 25.900px;
    letter-spacing: 0;
    margin-left: -5px;
}
.checkpoint {
    height: 188px;
    margin: 28px 21px 0;
    padding: 20px 15px 0;
    background-color: #f0f1f3;
    border-radius: 16px;
}
.cp-head {
    height: 28px;
    display: flex;
    align-items: center;
    gap: 13px;
    color: #565a61;
    font-size: 24px;
}
.cp-head span + span {
    margin-left: -2px;
}
.cp-check {
    margin-left: 2px;
    margin-right: -1px;
    color: #1f7a2e;
}
.cp-title {
    margin-top: 17px;
    line-height: 36px;
    letter-spacing: 0.2px;
    color: #111;
}
.cp-actions {
    margin-top: 15px;
    display: flex;
    gap: 16px;
}
.cp-btn {
    height: 56px;
    display: flex;
    align-items: center;
    gap: 10px;
    padding: 0 18px;
    background-color: #e3e4e7;
    border-radius: 8px;
    color: #565a61;
    font-size: 24px;
}
.work-time {
    height: 68px;
    margin: 28px 21px 0;
    display: flex;
    align-items: center;
    gap: 18px;
    padding: 0 13px 0 17px;
    background-color: #f0f1f3;
    border-radius: 16px;
    color: #565a61;
    font-size: 24px;
}
.work-chev {
    margin-left: auto;
}
.composer {
    height: 147px;
    margin: 44px 12px 0 13px;
    padding: 20px 11px 0 11px;
    background-color: #fff;
    border: 2px solid #bdbdbd;
    border-radius: 16px;
}
.composer-text {
    padding-left: 8px;
    line-height: 36px;
    color: #6b6e75;
}
.composer-tools {
    margin-top: 29px;
    display: flex;
    align-items: center;
    color: #333;
}
.build-btn {
    width: 160px;
    height: 47px;
    display: flex;
    align-items: center;
    gap: 11px;
    padding-left: 12px;
    background-color: #f0f1f3;
    border-radius: 8px;
    font-size: 25px;
}
.build-chev {
    margin-left: 7px;
}
.tool-select { margin-left: 18px; }
.tool-clip { margin-left: 28px; }
.tool-sliders { margin-left: auto; }
.tool-send { margin: 0 13px 0 37px; }

/* workspace pane */
.pane {
    width: 2005px;
    flex: none;
}
.pane-tabs {
    height: 56px;
    margin-top: 12px;
    display: flex;
    align-items: center;
    gap: 8px;
    font-size: 28px;
    color: #5f6269;
}
.ptab {
    width: 242px;
    height: 56px;
    flex: none;
    display: flex;
    align-items: center;
    gap: 14px;
    padding: 0 14px 0 14px;
    border-radius: 8px;
}
.ptab-on {
    background-color: #f0f1f3;
    color: #1a1b1e;
}
.ptab-x {
    width: 30px;
    height: 30px;
    margin-left: auto;
    color: #aaa;
    stroke-width: 1.200;
}
.term-ic {
    margin-right: 4px;
}
.lock-ic {
    width: 22px;
    height: 28px;
    margin-right: 6px;
}
.ptab-add {
    margin-left: 11px;
    color: #444;
}
.pane-search {
    margin-left: 59px;
    color: #111;
}
.pane-invite {
    margin-left: 24px;
    color: #111;
}
.republish {
    width: 220px;
    height: 56px;
    margin-left: 12px;
    display: flex;
    background-color: #f0f1f3;
    border-radius: 8px;
    color: #111;
    font-size: 25px;
}
.republish-main {
    width: 175px;
    display: flex;
    align-items: center;
    gap: 7px;
    padding-left: 18px;
    border-right: 2px solid #fff;
}
.republish-side {
    flex: 1;
    display: flex;
    align-items: center;
    justify-content: center;
}
.pane-split {
    margin-left: 18px;
    color: #111;
}
.frame {
    height: 1569px;
    margin-top: 12px;
    display: flex;
    flex-direction: column;
    border: 2px solid #bdbdbd;
    border-radius: 12px;
    overflow: hidden;
    background-color: #fff;
}
.frame-bar {
    height: 70px;
    flex: none;
    display: flex;
    align-items: center;
    color: #222;
    font-size: 25.600px;
}
.fb-back { margin-left: 18px; }
.fb-fwd { margin-left: 30px; color: #555; }
.fb-reload { margin-left: 28px; }
.frame-url {
    width: 1501px;
    height: 48px;
    margin-left: 14px;
    display: flex;
    align-items: center;
    padding-left: 9px;
    background-color: #f0f1f3;
    border-radius: 8px;
    white-space: nowrap;
}
.host {
    margin-left: 8px;
    color: #6a6d74;
}
.fb-devices { margin-left: 17px; }
.fb-palette { margin-left: 24px; }
.fb-theme {
    margin-left: 19px;
    color: #5f6269;
    font-size: 28px;
}
.fb-wrench { margin-left: 25px; }
.fb-ext { margin-left: 26px; }

/* dimmed app */
.stage {
    position: relative;
    flex: 1;
    display: flex;
    background-color: #333;
    font-family: Inter, sans-serif;
    color: #0c0c0e;
}
.gb-dark {
    color: #2d3035;
}
.gb-side {
    width: 510px;
    flex: none;
    border-right: 2px solid #2f2f2f;
}
.gb-brand {
    height: 191px;
    display: flex;
    gap: 26px;
    padding: 54px 0 0 46px;
    border-bottom: 2px solid #2f2f2f;
}
.gb-tile {
    width: 79px;
    height: 79px;
    margin-top: 2px;
    display: flex;
    align-items: center;
    justify-content: center;
    background-color: #0c152e;
    border-radius: 16px;
}
.gb-name {
    font-size: 40px;
    font-weight: 700;
    line-height: 44px;
}
.gb-tagline {
    margin-top: 10px;
    font-size: 28px;
    color: #212226;
}
.gb-nav {
    display: flex;
    flex-direction: column;
    gap: 16px;
    padding: 35px 32px 32px 31px;
    border-bottom: 2px solid #2f2f2f;
}
.gb-link {
    height: 80px;
    display: flex;
    align-items: center;
    gap: 40px;
    padding-left: 33px;
    font-size: 28px;
    font-weight: 500;
}
.gb-link-on {
    background-color: #0c152e;
    border-radius: 14px;
    color: #2f3236;
}
.gb-user {
    display: flex;
    gap: 24px;
    padding: 35px 0 0 31px;
}
.gb-avatar {
    width: 64px;
    height: 64px;
    display: flex;
    align-items: center;
    justify-content: center;
    background-color: #0c152e;
    border-radius: 50%;
}
.gb-user-name {
    margin-top: 2px;
    font-size: 28px;
    font-weight: 500;
    line-height: 32px;
}
.gb-user-role {
    margin-top: 3px;
    font-size: 24px;
    color: #212226;
}
.gb-logout {
    display: flex;
    align-items: center;
    gap: 33px;
    margin-top: 50px;
    padding-left: 63px;
    font-size: 28px;
    font-weight: 500;
}
.gb-main {
    flex: 1;
}
.gb-header {
    height: 176px;
    display: flex;
    align-items: center;
    padding: 0 73px 2px 80px;
    border-bottom: 2px solid #2f2f2f;
    color: #1a1b1e;
}
.gb-header h1 {
    font-size: 48px;
    font-weight: 700;
    line-height: 56px;
    letter-spacing: -1.100px;
    color: #0c0c0e;
}
.gb-header p {
    margin-top: 7px;
    font-size: 32px;
    color: #212226;
}
.gb-bell {
    margin-left: auto;
    margin-right: 80px;
}
.gb-body {
    padding: 257px 49px 0 51px;
}
.gb-club {
    padding-left: 959px;
    font-size: 28px;
    line-height: 40px;
    color: #1a1b1e;
    white-space: nowrap;
}
.gb-tabs {
    height: 85px;
    margin-top: 250px;
    display: flex;
    align-items: center;
    justify-content: flex-end;
    padding-right: 295px;
    background-color: #313131;
    border-radius: 12px;
    font-size: 28px;
    font-weight: 500;
}
.gb-card {
    height: 630px;
    margin-top: 34px;
    padding: 48px 47px 0;
    border: 2px solid #2e2e2e;
    border-radius: 16px;
}
.gb-card-head {
    display: flex;
    justify-content: flex-end;
}
.gb-btn {
    width: 322px;
    height: 88px;
    display: flex;
    align-items: center;
    justify-content: center;
    background-color: #0c152e;
    border-radius: 12px;
    color: #33363b;
    font-size: 26px;
    font-weight: 500;
    letter-spacing: -0.1px;
}
.gb-empty {
    margin-top: 340px;
    font-size: 28px;
    line-height: 40px;
    text-align: center;
    color: #1d1e20;
}

/* dialog */
.modal {
    position: absolute;
    left: 532px;
    top: 181px;
    width: 999px;
    height: 1135px;
    padding: 54px 48px 0 48px;
    background-color: #f9fafc;
    border: 2px solid #e2e8f0;
    border-radius: 16px;
    color: #0b1120;
}
.modal-x {
    position: absolute;
    top: 29px;
    right: 29px;
    width: 38px;
    height: 38px;
    color: #444;
    stroke-width: 1.500;
}
.modal h2 {
    font-size: 39px;
    font-weight: 600;
    line-height: 44px;
    letter-spacing: -0.9px;
}
.modal-desc {
    margin-top: 18px;
    font-size: 28px;
    line-height: 40px;
    color: #64748b;
}
.field-row {
    margin-top: 39px;
    display: grid;
    grid-template-columns: 433px 433px;
    gap: 33px;
}
.field {
    margin-top: 40px;
}
.field-row .field {
    margin-top: 0;
}
.field label {
    display: block;
    height: 36px;
    font-size: 28px;
    font-weight: 500;
    line-height: 36px;
}
.select {
    height: 86px;
    margin-top: 22px;
    display: flex;
    align-items: center;
    justify-content: space-between;
    padding: 0 21px 0 24px;
    border: 2px solid #e2e8f0;
    border-radius: 12px;
    font-size: 28px;
    color: #0b1120;
}
.select .ic {
    color: #7a7f87;
    stroke-width: 1.500;
}
.select-filled {
    background-color: #e8f0fe;
}
.select-empty {
    color: #64748b;
}
.menu {
    position: absolute;
    left: 48px;
    top: 757px;
    width: 904px;
    height: 402px;
    padding: 8px 8px;
    list-style: none;
    background-color: #fff;
    border: 2px solid #e2e8f0;
    border-radius: 12px;
    box-shadow: 0 6px 14px rgba(0, 0, 0, 0.12);
    font-size: 28px;
}
.menu li {
    height: 64px;
    display: flex;
    align-items: center;
    padding-left: 64px;
    border-radius: 8px;
}
.menu .menu-on {
    background-color: #5ec16b;
    color: #fff;
}
```
